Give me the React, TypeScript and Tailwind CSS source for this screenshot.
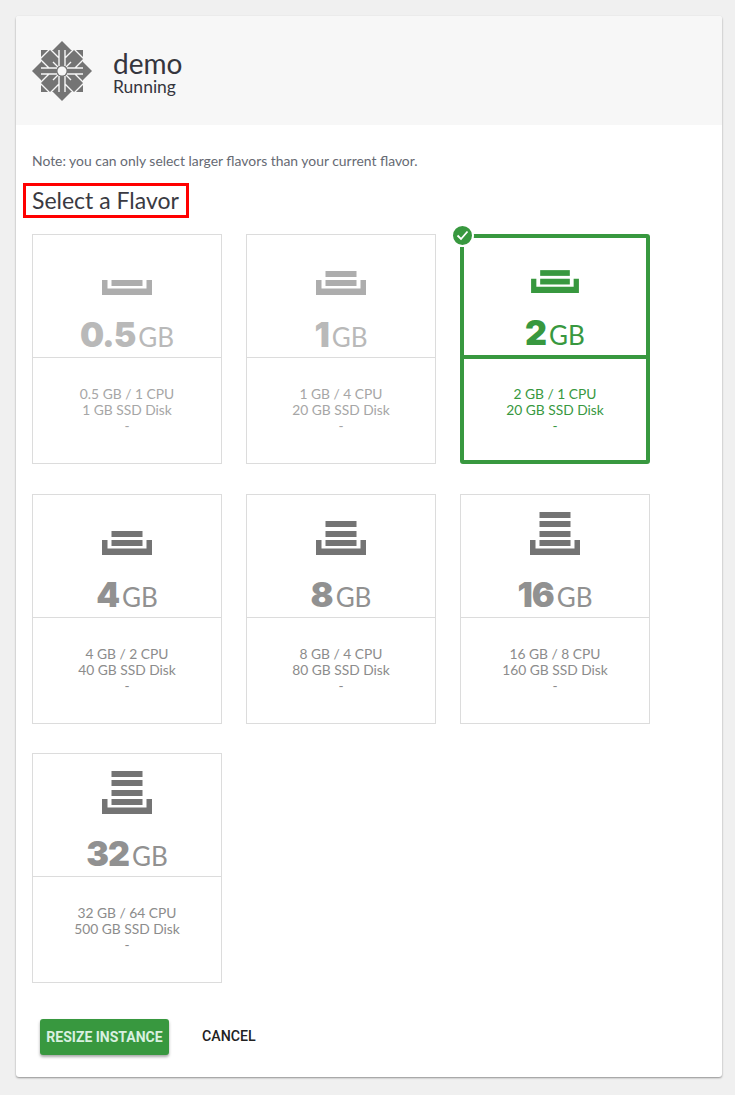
const flavors = [
  { size: "0.5", ram: "0.5 GB / 1 CPU", disk: "1 GB SSD Disk", bars: 1, state: "disabled" },
  { size: "1", ram: "1 GB / 4 CPU", disk: "20 GB SSD Disk", bars: 2, state: "disabled" },
  { size: "2", ram: "2 GB / 1 CPU", disk: "20 GB SSD Disk", bars: 2, state: "selected" },
  { size: "4", ram: "4 GB / 2 CPU", disk: "40 GB SSD Disk", bars: 2, state: "normal" },
  { size: "8", ram: "8 GB / 4 CPU", disk: "80 GB SSD Disk", bars: 3, state: "normal" },
  { size: "16", ram: "16 GB / 8 CPU", disk: "160 GB SSD Disk", bars: 4, state: "normal" },
  { size: "32", ram: "32 GB / 64 CPU", disk: "500 GB SSD Disk", bars: 4, state: "normal" },
]

function StackIcon({ bars, color }: { bars: number; color: string }) {
  const ys = [29, 20, 10, 1].slice(0, bars)
  return (
    <svg width="52" height="46" viewBox="0 0 52 46" fill={color}>
      <path d="M1 29h5.500v8.500h39v-8.500h5.500v15h-50z" />
      {ys.map((y) => (
        <rect key={y} x="10.500" y={y} width="31" height="6" />
      ))}
    </svg>
  )
}

function CentosLogo() {
  return (
    <svg width="60" height="60" viewBox="-30 -30 60 60">
      <rect x="-21" y="-21" width="42" height="42" fill="#747474" />
      {[0, 90, 180, 270].map((r) => (
        <g key={r} transform={`rotate(${r})`}>
          <path d="M0 -30 L9 -21 L-9 -21 Z" fill="#747474" />
          <path
            d="M3 -5V-21 M3 -13 L12 -22 M12 -22 L22 -12 M22 -12 L13 -3 M5 -3H21 M4 -4 L9 -9"
            fill="none"
            stroke="#f7f7f7"
            strokeWidth="1.400"
          />
        </g>
      ))}
      <circle r="4.500" fill="#f7f7f7" />
    </svg>
  )
}

function FlavorTile({ flavor }: { flavor: (typeof flavors)[number] }) {
  const selected = flavor.state === "selected"
  const disabled = flavor.state === "disabled"
  const iconColor = selected ? "#38983f" : disabled ? "#adadad" : "#747474"
  return (
    <div
      className={`relative flex h-[230px] w-[190px] flex-col bg-white ${
        selected ? "rounded-[3px] border-4 border-[#38983f]" : "border border-[#dcdcdc]"
      } ${selected ? "text-[#38983f]" : disabled ? "text-[#a6a6a6]" : "text-[#8c8c8c]"}`}
    >
      {selected && (
        <div className="absolute left-[-13px] top-[-14px] flex h-[23px] w-[23px] items-center justify-center rounded-full border-2 border-white bg-[#38983f]">
          <svg width="13" height="11" viewBox="0 0 13 11" fill="none" stroke="#fff" strokeWidth="1.800">
            <path d="M1.500 5.500l3.500 3.500 6.500-7.500" />
          </svg>
        </div>
      )}
      <div className={`flex flex-col items-center ${selected ? "h-[117px] pt-[13px]" : "h-[122px] pt-[16px]"}`}>
        <StackIcon bars={flavor.bars} color={iconColor} />
        <div
          className={`mt-[18px] flex items-baseline gap-[3px] leading-[40px] ${
            disabled ? "text-[#b9b9b9]" : selected ? "text-[#38983f]" : "text-[#919191]"
          }`}
        >
          <span className="font-['Inter',sans-serif] text-[34px] font-black tracking-[-1px]">{flavor.size}</span>
          <span className="text-[26px]">GB</span>
        </div>
      </div>
      <div
        className={`flex flex-1 flex-col items-center text-[13.800px] leading-4 ${
          selected ? "border-t-4 border-[#38983f] pt-[27px]" : "border-t border-[#dcdcdc] pt-[28px]"
        }`}
      >
        <span>{flavor.ram}</span>
        <span>{flavor.disk}</span>
        <span>-</span>
      </div>
    </div>
  )
}

export default function App() {
  return (
    <div className="min-h-[1095px] bg-[#f0f0f0] px-4 pt-4 font-['Lato','Open_Sans',sans-serif]">
      <div className="h-[1061px] w-[706px] rounded-[3px] bg-white shadow-[0_1px_2px_rgba(0,0,0,0.4)]">
        <div className="flex h-[109px] items-center gap-[21px] rounded-t-[3px] bg-[#f7f7f7] pl-4">
          <CentosLogo />
          <div className="pt-[4px] text-[#35353d]">
            <div className="text-[28px] leading-[28px]">demo</div>
            <div className="text-[17.500px] leading-[20px]">Running</div>
          </div>
        </div>
        <div className="px-4 pt-[28px]">
          <p className="text-[13.900px] leading-4 text-[#666a73]">
            Note: you can only select larger flavors than your current flavor.
          </p>
          <h2 className="-ml-[9px] mt-[14px] w-[166px] border-[3px] border-[#ff0000] pl-[6px] text-[23px] leading-[29px] text-[#3a3a42]">
            Select a Flavor
          </h2>
          <div className="mt-4 grid grid-cols-[190px_190px_190px] gap-x-6 gap-y-[29.500px]">
            {flavors.map((f) => (
              <FlavorTile key={f.size} flavor={f} />
            ))}
          </div>
          <div className="mt-9 flex items-center gap-[33px] pl-2">
            <button className="h-9 w-[129px] rounded-[3px] bg-[#38983f] text-center font-['Roboto',sans-serif] text-[14px] font-bold text-[#d9f0e0] shadow-[0_2px_3px_rgba(0,0,0,0.35)]">
              RESIZE INSTANCE
            </button>
            <button className="font-['Roboto',sans-serif] text-[14.200px] font-medium text-[#222]">CANCEL</button>
          </div>
        </div>
      </div>
    </div>
  )
}
